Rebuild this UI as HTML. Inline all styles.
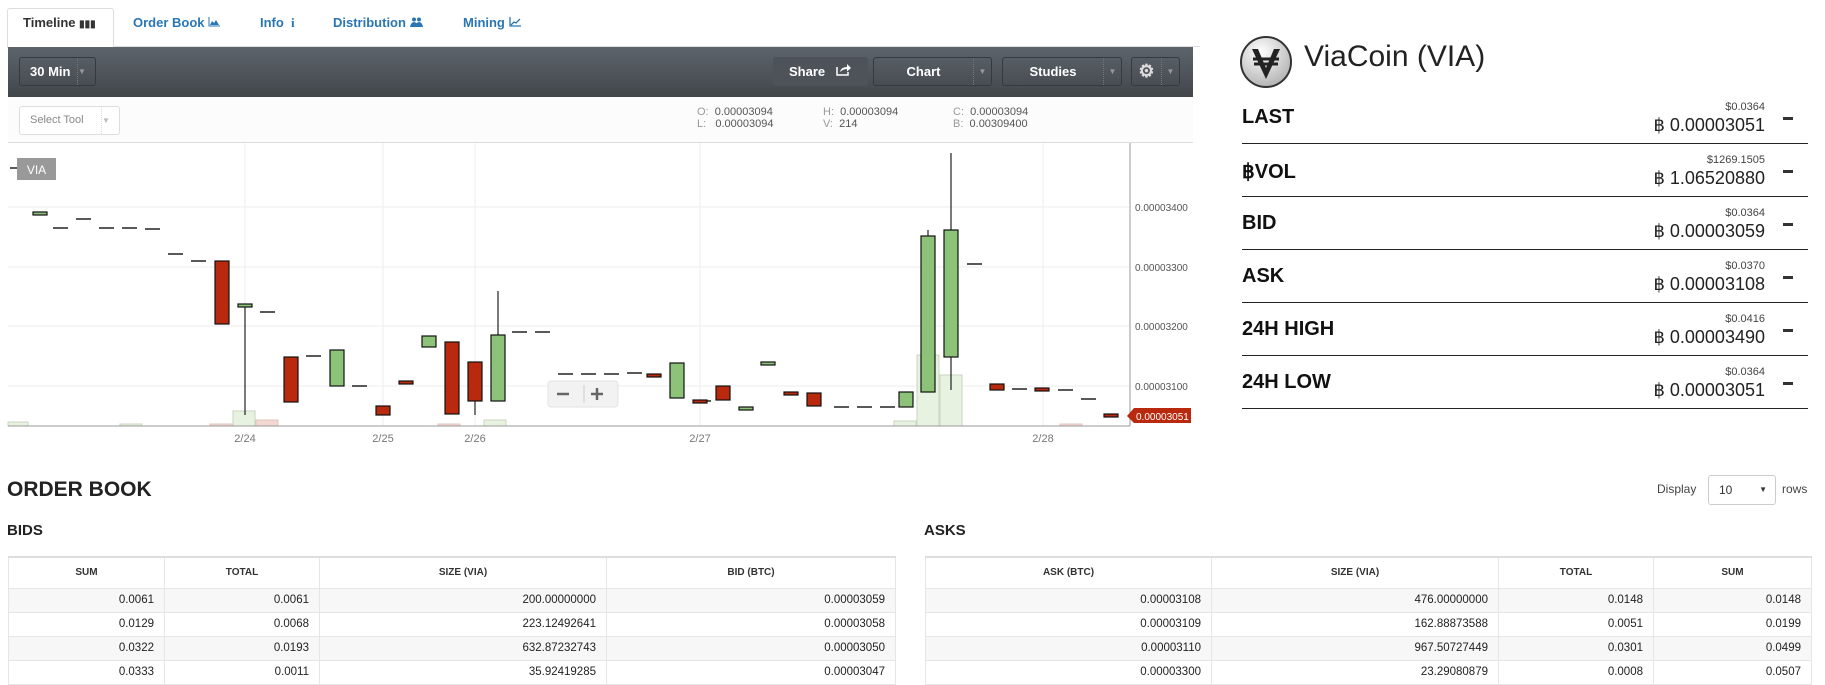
<!DOCTYPE html>
<html><head><meta charset="utf-8">
<style>
*{box-sizing:border-box;margin:0;padding:0}
body{width:1825px;height:674px;overflow:hidden;background:#fff;font-family:"Liberation Sans",sans-serif;position:relative;color:#222}
.a{position:absolute}
.tab{position:absolute;top:15px;font-size:13px;font-weight:bold;color:#2a76b5;white-space:nowrap}
.btn{position:absolute;top:57px;height:29px;border:1px solid #363a3e;border-radius:3px;color:#fff;font-size:13px;font-weight:bold;text-align:center;line-height:27px}
.dd{position:absolute;right:0;top:0;width:18px;height:27px;border-left:1px dotted #777;color:#999;font-size:8px;line-height:27px}
.lbl{position:absolute;left:1242px;font-size:20px;font-weight:bold;color:#111}
.usd{position:absolute;right:60px;font-size:11px;color:#444;text-align:right}
.val{position:absolute;right:60px;font-size:18px;color:#222;text-align:right}
.dash{position:absolute;left:1783px;width:10px;height:3px;background:#333}
.hr{position:absolute;left:1242px;width:566px;height:1px;background:#222}
table{position:absolute;border-collapse:collapse;font-size:11.5px;table-layout:fixed}
td,th{border:1px solid #e6e6e6;height:24px;padding:0 10px;text-align:right;color:#222}
th{height:31px;text-align:center;font-size:10px;font-weight:bold;color:#333;border-top:2px solid #ddd}
tr.o td{background:#f7f7f7}
</style></head><body>
<!-- tabs -->
<div class="a" style="left:7px;top:8px;width:107px;height:40px;border:1px solid #ddd;border-bottom:none;border-radius:3px 3px 0 0;background:#fff"></div>
<div class="a" style="left:114px;top:46px;width:1086px;height:1px;background:#ddd"></div>
<div class="tab" style="left:23px;color:#333">Timeline <span style="font-size:10px">&#9646;&#9646;&#9646;</span></div>
<div class="tab" style="left:133px">Order Book <svg width="13" height="10" viewBox="0 0 13 10"><path d="M1 0V9H12" stroke="#2a76b5" fill="none"/><path d="M2 8L4 4 6 6 8 3 11 8Z" fill="#2a76b5"/></svg></div>
<div class="tab" style="left:260px">Info &nbsp;<span style="font-family:'Liberation Serif'">i</span></div>
<div class="tab" style="left:333px">Distribution <svg width="13" height="10" viewBox="0 0 13 10"><circle cx="4" cy="2.5" r="2" fill="#2a76b5"/><circle cx="9" cy="2.5" r="2" fill="#2a76b5"/><path d="M0 10Q1 5 4 5Q7 5 8 10ZM5 10Q6 5 9 5Q12 5 13 10Z" fill="#2a76b5"/></svg></div>
<div class="tab" style="left:463px">Mining <svg width="12" height="10" viewBox="0 0 12 10"><path d="M1 0V9H12M2 8L5 5 7 6 11 2" stroke="#2a76b5" fill="none" stroke-width="1.3"/></svg></div>
<!-- toolbar -->
<div class="a" style="left:8px;top:47px;width:1185px;height:50px;background:linear-gradient(#5d646b,#41464b)"></div>
<div class="btn" style="left:19px;width:77px;text-align:left;padding-left:10px">30 Min<div class="dd">&#9660;</div></div>
<div class="btn" style="left:773px;width:95px;background:#4d5359;border-color:#4d5359">Share &nbsp;&nbsp;<svg width="16" height="13" viewBox="0 0 16 13"><path d="M1 4V12H12V9" stroke="#fff" fill="none" stroke-width="1.5"/><path d="M4 9Q5 4 11 4V1L15 5 11 8.5V6Q7 6 4 9Z" fill="#fff"/></svg></div>
<div class="btn" style="left:873px;width:119px;padding-right:18px">Chart<div class="dd">&#9660;</div></div>
<div class="btn" style="left:1002px;width:120px;padding-right:18px">Studies<div class="dd">&#9660;</div></div>
<div class="btn" style="left:1131px;width:49px;padding-right:18px;font-size:18px;color:#ddd">&#9881;<div class="dd">&#9660;</div></div>
<!-- select tool row -->
<div class="a" style="left:8px;top:97px;width:1185px;height:46px;background:#fcfcfc;border-bottom:1px solid #ddd"></div>
<div class="a" style="left:19px;top:106px;width:101px;height:29px;border:1px solid #ddd;border-radius:3px;background:#fff;font-size:11px;color:#888;line-height:27px;padding-left:10px">Select Tool<div class="dd" style="border-color:#ddd;color:#bbb">&#9660;</div></div>
<div class="a" style="left:697px;top:106px;font-size:11px;line-height:12px;color:#999;white-space:pre">O:  <span style="color:#555">0.00003094</span>
L:   <span style="color:#555">0.00003094</span></div>
<div class="a" style="left:823px;top:106px;font-size:11px;line-height:12px;color:#999;white-space:pre">H:  <span style="color:#555">0.00003094</span>
V:  <span style="color:#555">214</span></div>
<div class="a" style="left:953px;top:106px;font-size:11px;line-height:12px;color:#999;white-space:pre">C:  <span style="color:#555">0.00003094</span>
B:  <span style="color:#555">0.00309400</span></div>
<!-- chart -->
<svg class="a" style="left:0;top:0" width="1200" height="460" viewBox="0 0 1200 460">
<g stroke="#eee" stroke-width="1">
<line x1="8" y1="207" x2="1130" y2="207"/><line x1="8" y1="267" x2="1130" y2="267"/><line x1="8" y1="326" x2="1130" y2="326"/><line x1="8" y1="386" x2="1130" y2="386"/>
<line x1="245" y1="143" x2="245" y2="426"/><line x1="383" y1="143" x2="383" y2="426"/><line x1="475" y1="143" x2="475" y2="426"/><line x1="700" y1="143" x2="700" y2="426"/><line x1="1043" y1="143" x2="1043" y2="426"/>
</g>
<g fill="#e8f2e0" stroke="#c9d6c0"><rect x="8" y="422" width="20" height="4"/><rect x="233" y="411" width="22" height="15"/><rect x="484" y="420" width="22" height="6"/><rect x="894" y="421" width="22" height="5"/><rect x="917" y="355" width="22" height="71"/><rect x="940" y="375" width="22" height="51"/><rect x="120" y="424" width="22" height="2"/></g>
<g fill="#f2d8d2" stroke="#e0c4bc"><rect x="210" y="424" width="22" height="2"/><rect x="256" y="420" width="22" height="6"/><rect x="438" y="424" width="22" height="2"/><rect x="1060" y="424" width="22" height="2"/></g>
<line x1="8" y1="426" x2="1130" y2="426" stroke="#999"/>
<line x1="1130" y1="143" x2="1130" y2="426" stroke="#999"/>
<g stroke="#222" stroke-width="1.2">
<line x1="245" y1="305" x2="245" y2="415"/><line x1="498" y1="291" x2="498" y2="401"/><line x1="475" y1="401" x2="475" y2="415"/><line x1="951" y1="153" x2="951" y2="390"/><line x1="928" y1="230" x2="928" y2="236"/>
</g>
<g stroke="#222" stroke-width="1.5">
<path d="M53 228h15M76 219h15M99 228h15M122 228h15M145 229h15M168 254h15M191 261h15M260 312h15M306 356h15M352 386h15M512 332h15M535 332h15M558 374h15M581 374h15M604 374h15M627 373h15M696 401h15M834 407h15M857 407h15M880 407h15M967 264h15M1012 389h15M1058 390h15M1081 399h15M10 168h8"/>
</g>
<g stroke="#111" stroke-width="1.2" fill="#8dc378">
<rect x="33" y="212" width="14" height="3"/><rect x="238" y="304" width="14" height="3"/><rect x="330" y="350" width="14" height="36"/><rect x="422" y="336" width="14" height="11"/><rect x="491" y="335" width="14" height="66"/><rect x="670" y="363" width="14" height="35"/><rect x="739" y="407" width="14" height="3"/><rect x="761" y="362" width="14" height="3"/><rect x="899" y="392" width="14" height="15"/><rect x="921" y="236" width="14" height="156"/><rect x="944" y="230" width="14" height="127"/>
</g>
<g stroke="#111" stroke-width="1.2" fill="#b8290d">
<rect x="215" y="261" width="14" height="63"/><rect x="284" y="357" width="14" height="45"/><rect x="376" y="406" width="14" height="9"/><rect x="399" y="381" width="14" height="3"/><rect x="445" y="342" width="14" height="72"/><rect x="468" y="362" width="14" height="39"/><rect x="647" y="374" width="14" height="3"/><rect x="693" y="400" width="14" height="3"/><rect x="716" y="386" width="14" height="14"/><rect x="784" y="392" width="14" height="3"/><rect x="807" y="393" width="14" height="13"/><rect x="990" y="384" width="14" height="6"/><rect x="1035" y="388" width="14" height="3"/><rect x="1104" y="414" width="14" height="3"/>
</g>
<rect x="17" y="158" width="39" height="22" fill="#999"/>
<text x="36.5" y="174" font-size="12" fill="#fff" text-anchor="middle" font-family="Liberation Sans">VIA</text>
<rect x="548" y="381" width="70" height="26" rx="3" fill="#f2f2f2" stroke="#e3e3e3"/>
<path d="M557 394h12M591 394h12M597 388v12" stroke="#666" stroke-width="2.5"/><line x1="584" y1="385" x2="584" y2="403" stroke="#ccc"/>
<g font-size="11" fill="#777" font-family="Liberation Sans" text-anchor="middle"><text x="245" y="442">2/24</text><text x="383" y="442">2/25</text><text x="475" y="442">2/26</text><text x="700" y="442">2/27</text><text x="1043" y="442">2/28</text></g>
<g font-size="10" fill="#555" font-family="Liberation Sans"><text x="1135" y="211">0.00003400</text><text x="1135" y="271">0.00003300</text><text x="1135" y="330">0.00003200</text><text x="1135" y="390">0.00003100</text></g>
<path d="M1127 416l7-8h57v15h-57z" fill="#b8290d"/>
<text x="1136" y="420" font-size="10" fill="#fff" font-family="Liberation Sans">0.00003051</text>
</svg>
<!-- right panel -->
<svg class="a" style="left:1239px;top:35px" width="54" height="54" viewBox="0 0 54 54"><defs><radialGradient id="g" cx="0.4" cy="0.3" r="0.8"><stop offset="0" stop-color="#fff"/><stop offset="1" stop-color="#aaa"/></radialGradient></defs><circle cx="27" cy="27" r="25" fill="url(#g)" stroke="#333" stroke-width="2"/><path d="M13 14L27 44 41 14 35 14 27 33 19 14Z" fill="#222"/><path d="M14 24h26M15 29h24" stroke="#222" stroke-width="3"/></svg>
<div class="a" style="left:1304px;top:40px;font-size:30px;color:#222">ViaCoin (VIA)</div>
<div class="lbl" style="top:106px">LAST</div><div class="usd" style="top:101px">$0.0364</div><div class="val" style="top:115px">&#3647; 0.00003051</div><div class="dash" style="top:117px"></div><div class="hr" style="top:143px"></div>
<div class="lbl" style="top:159px">&#3647;VOL</div><div class="usd" style="top:154px">$1269.1505</div><div class="val" style="top:168px">&#3647; 1.06520880</div><div class="dash" style="top:170px"></div><div class="hr" style="top:196px"></div>
<div class="lbl" style="top:212px">BID</div><div class="usd" style="top:207px">$0.0364</div><div class="val" style="top:221px">&#3647; 0.00003059</div><div class="dash" style="top:223px"></div><div class="hr" style="top:249px"></div>
<div class="lbl" style="top:265px">ASK</div><div class="usd" style="top:260px">$0.0370</div><div class="val" style="top:274px">&#3647; 0.00003108</div><div class="dash" style="top:276px"></div><div class="hr" style="top:302px"></div>
<div class="lbl" style="top:318px">24H HIGH</div><div class="usd" style="top:313px">$0.0416</div><div class="val" style="top:327px">&#3647; 0.00003490</div><div class="dash" style="top:329px"></div><div class="hr" style="top:355px"></div>
<div class="lbl" style="top:371px">24H LOW</div><div class="usd" style="top:366px">$0.0364</div><div class="val" style="top:380px">&#3647; 0.00003051</div><div class="dash" style="top:382px"></div><div class="hr" style="top:408px"></div>
<!-- order book -->
<div class="a" style="left:7px;top:478px;font-size:21px;font-weight:bold;color:#222">ORDER BOOK</div>
<div class="a" style="left:1657px;top:482px;font-size:12px;color:#444">Display</div>
<div class="a" style="left:1708px;top:475px;width:68px;height:30px;border:1px solid #ccc;border-radius:3px;font-size:12px;color:#333;line-height:28px;padding-left:10px">10<span style="position:absolute;right:8px;font-size:8px">&#9660;</span></div>
<div class="a" style="left:1782px;top:482px;font-size:12px;color:#444">rows</div>
<div class="a" style="left:7px;top:522px;font-size:15px;font-weight:bold;color:#222">BIDS</div>
<div class="a" style="left:924px;top:522px;font-size:15px;font-weight:bold;color:#222">ASKS</div>
<table style="left:8px;top:556px;width:887px">
<colgroup><col style="width:156px"><col style="width:155px"><col style="width:287px"><col style="width:289px"></colgroup>
<tr><th>SUM</th><th>TOTAL</th><th>SIZE (VIA)</th><th>BID (BTC)</th></tr>
<tr class="o"><td>0.0061</td><td>0.0061</td><td>200.00000000</td><td>0.00003059</td></tr>
<tr><td>0.0129</td><td>0.0068</td><td>223.12492641</td><td>0.00003058</td></tr>
<tr class="o"><td>0.0322</td><td>0.0193</td><td>632.87232743</td><td>0.00003050</td></tr>
<tr><td>0.0333</td><td>0.0011</td><td>35.92419285</td><td>0.00003047</td></tr>
</table>
<table style="left:925px;top:556px;width:886px">
<colgroup><col style="width:286px"><col style="width:287px"><col style="width:155px"><col style="width:158px"></colgroup>
<tr><th>ASK (BTC)</th><th>SIZE (VIA)</th><th>TOTAL</th><th>SUM</th></tr>
<tr class="o"><td>0.00003108</td><td>476.00000000</td><td>0.0148</td><td>0.0148</td></tr>
<tr><td>0.00003109</td><td>162.88873588</td><td>0.0051</td><td>0.0199</td></tr>
<tr class="o"><td>0.00003110</td><td>967.50727449</td><td>0.0301</td><td>0.0499</td></tr>
<tr><td>0.00003300</td><td>23.29080879</td><td>0.0008</td><td>0.0507</td></tr>
</table>
</body></html>
